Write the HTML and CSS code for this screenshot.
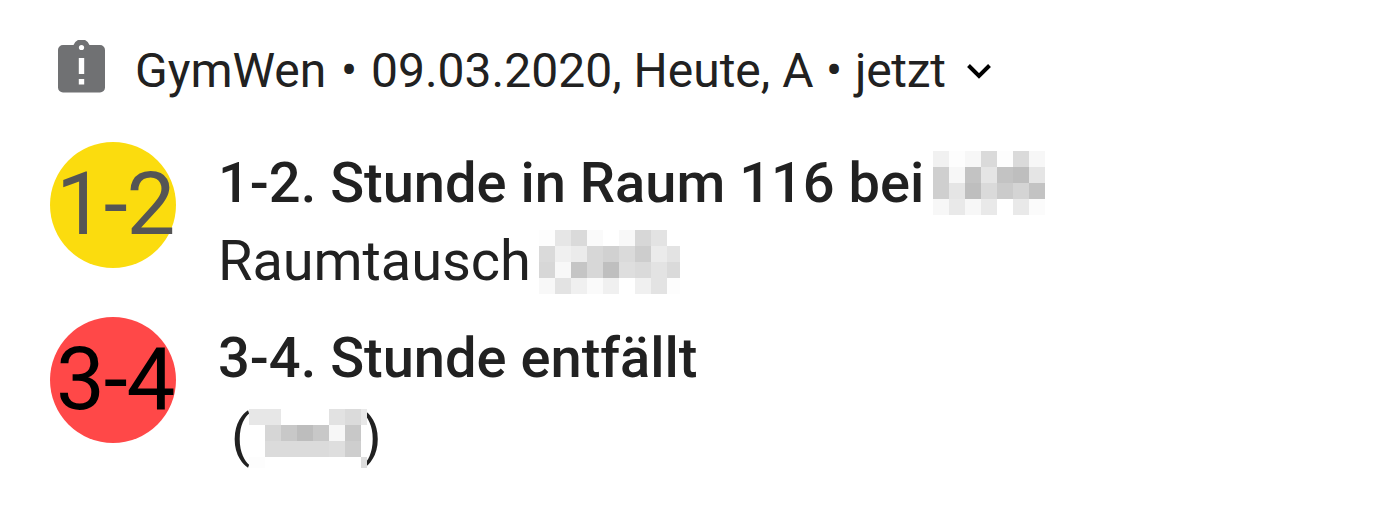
FILE: index.html
```
<!DOCTYPE html>
<html lang="de">
<head>
<meta charset="utf-8">
<title>GymWen</title>
<link rel="stylesheet" href="styles.css">
</head>
<body>
<main class="notification">
  <header class="header">
    <svg class="app-icon" width="48" height="54" viewBox="0 0 48 54">
      <path fill="#707173" d="M5.500 5H16.500a8.500 8.500 0 0 1 16 0h10.500a5 5 0 0 1 5 5v37.500a5 5 0 0 1-5 5h-37a5 5 0 0 1-5-5V10a5 5 0 0 1 5-5z"/>
      <circle cx="24.500" cy="7.500" r="2.600" fill="#fff"/>
      <path fill="#fff" d="M21.800 18h5.400v16h-5.400zM21.800 39h5.400v5.500h-5.400z"/>
    </svg>
    <span class="app-name">GymWen</span>
    <span class="dot">•</span>
    <span class="summary">09.03.2020, Heute, A</span>
    <span class="dot">•</span>
    <span class="time">jetzt</span>
    <svg class="chevron" width="26" height="17" viewBox="0 0 26 17"><path d="M2.500 2.500 13 13 23.500 2.500" fill="none" stroke="#000" stroke-width="4"/></svg>
  </header>
  <section class="entry">
    <div class="badge badge-moved"><span class="badge-text">1-2</span></div>
    <div class="lines">
      <div class="line title"><span class="title-text">1-2. Stunde in Raum 116 bei</span>
        <svg class="mosaic mosaic-teacher" width="112" height="64" viewBox="0 0 7 4" shape-rendering="crispEdges">
          <path fill="#f1f1f1" d="M0 0h1v1H0z"/><path fill="#fdfdfd" d="M1 0h1v1H1zM4 0h1v1H4z"/><path fill="#f7f7f7" d="M2 0h1v1H2zM6 0h1v1H6zM1 1h1v1H1zM0 3h1v1H0zM2 3h1v1H2z"/><path fill="#dadada" d="M3 0h1v1H3zM5 0h1v1H5zM3 2h1v1H3z"/>
          <path fill="#cfcfcf" d="M0 1h1v2H0z"/><path fill="#c3c3c3" d="M2 1h1v1H2zM4 1h1v1H4zM6 2h1v1H6z"/><path fill="#e5e5e5" d="M3 1h1v1H3zM6 1h1v1H6zM1 2h1v1H1z"/><path fill="#bebebe" d="M5 1h1v1H5zM2 2h1v1H2z"/><path fill="#cbcbcb" d="M4 2h1v1H4z"/><path fill="#d4d4d4" d="M5 2h1v1H5z"/>
          <path fill="#e9e9e9" d="M1 3h1v1H1zM3 3h1v1H3zM5 3h1v1H5z"/><path fill="#fbfbfb" d="M6 3h1v1H6z"/>
        </svg>
      </div>
      <div class="line body"><span class="body-text">Raumtausch</span>
        <svg class="mosaic mosaic-subject" width="141" height="64" viewBox="0 0 141 64" shape-rendering="crispEdges">
          <g transform="scale(16)">
          <path fill="#fdfdfd" d="M0 0h1v1H0zM8 3h1v1H8z"/><path fill="#e6e6e6" d="M1 0h1v1H1z"/><path fill="#dadada" d="M2 0h1v1H2zM0 1h1v1H0zM5 1h1v1H5zM6 2h1v1H6zM8 2h1v1H8z"/><path fill="#fafafa" d="M3 0h1v1H3zM3 3h1v1H3z"/><path fill="#f8f8f8" d="M5 0h1v1H5zM1 2h1v1H1zM0 3h1v1H0z"/><path fill="#d7d7d7" d="M6 0h1v1H6zM3 1h1v2H3zM0 2h1v1H0z"/><path fill="#e3e3e3" d="M7 0h1v1H7zM7 2h1v2H7zM1 3h1v1H1zM8 1h1v1H8z"/>
          <path fill="#f0f0f0" d="M1 1h1v1H1zM2 3h1v1H2zM4 3h1v1H4zM6 3h1v1H6z"/><path fill="#ebebeb" d="M2 1h1v1H2zM7 1h1v1H7z"/><path fill="#d1d1d1" d="M4 1h1v1H4z"/><path fill="#cdcdcd" d="M6 1h1v1H6z"/><path fill="#c5c5c5" d="M2 2h1v1H2z"/><path fill="#bfbfbf" d="M4 2h1v1H4z"/><path fill="#dedede" d="M5 2h1v1H5z"/>
          </g>
        </svg>
      </div>
    </div>
  </section>
  <section class="entry">
    <div class="badge badge-cancelled"><span class="badge-text">3-4</span></div>
    <div class="lines">
      <div class="line title"><span class="title-text">3-4. Stunde entfällt</span></div>
      <div class="line body"><span class="paren">(</span>
        <svg class="mosaic mosaic-name" width="118" height="59" viewBox="0 0 118 59" shape-rendering="crispEdges">
          <path fill="#fff" d="M0 0h118v59H0z"/>
          <g transform="scale(16)">
          <path fill="#e7e7e7" d="M0 0h2v1H0z"/><path fill="#e2e2e2" d="M5 0h1v1H5z"/><path fill="#dbdbdb" d="M6 0h1v1H6zM1 2h4v1H1z"/><path fill="#e8e8e8" d="M7 0h1v1H7z"/>
          <path fill="#d6d6d6" d="M1 1h1v1H1z"/><path fill="#c8c8c8" d="M2 1h1v1H2zM4 1h1v1H4zM6 1h1v1H6z"/><path fill="#bdbdbd" d="M3 1h1v1H3z"/><path fill="#f7f7f7" d="M5 1h1v1H5z"/><path fill="#dedede" d="M5 2h1v1H5zM7 3h1v1H7z"/><path fill="#cecece" d="M6 2h1v1H6z"/><path fill="#fdfdfd" d="M0 3h1v1H0z"/>
          </g>
        </svg>
        <span class="paren-close">)</span>
      </div>
    </div>
  </section>
</main>
</body>
</html>
```
FILE: styles.css
```
body { margin: 0; background: #fff; }
.notification {
  box-sizing: border-box;
  width: 1384px;
  height: 508px;
  padding: 40px 50px 0;
  overflow: hidden;
  font-family: Roboto, sans-serif;
  color: #212121;
}
.header {
  display: flex;
  height: 60px;
  margin-bottom: 42px;
  padding-left: 7px;
  font-size: 48px;
  line-height: 62px;
  white-space: nowrap;
}
.app-icon { flex: none; }
.app-name { width: 192px; margin-left: 30px; }
.dot { width: 42px; text-align: center; }
.summary { width: 442px; }
.time { width: 92px; letter-spacing: -0.3px; }
.app-name + .dot { width: 44px; }
.chevron { flex: none; margin: 23px 0 0 19px; }
.entry { display: flex; height: 175px; }
.badge {
  flex: none;
  width: 126px;
  height: 126px;
  border-radius: 50%;
  filter: blur(0.6px);
}
.badge-moved { background: #fbdc0e; color: #555; }
.badge-cancelled { background: #ff4848; color: #000; }
.badge-text {
  display: block;
  margin-left: 6px;
  font-size: 87px;
  line-height: 124px;
  letter-spacing: -1.2px;
  white-space: nowrap;
}
.lines { padding: 3px 0 0 42px; }
.line {
  display: flex;
  font-size: 56px;
  white-space: nowrap;
}
.title { height: 77px; line-height: 76px; font-weight: 500; }
.body { height: 78px; line-height: 78px; }
.title-text { width: 706px; }
.body-text { width: 312px; letter-spacing: -0.1px; }
.mosaic { flex: none; }
.mosaic-teacher { margin: 6px 0 0 9px; }
.mosaic-subject { margin: 8px 0 0 9px; }
.mosaic-name { z-index: 1; margin: 12px 0 0 -1px; }
.paren { margin-left: 13px; }
.paren-close { margin-left: -5px; }
```
